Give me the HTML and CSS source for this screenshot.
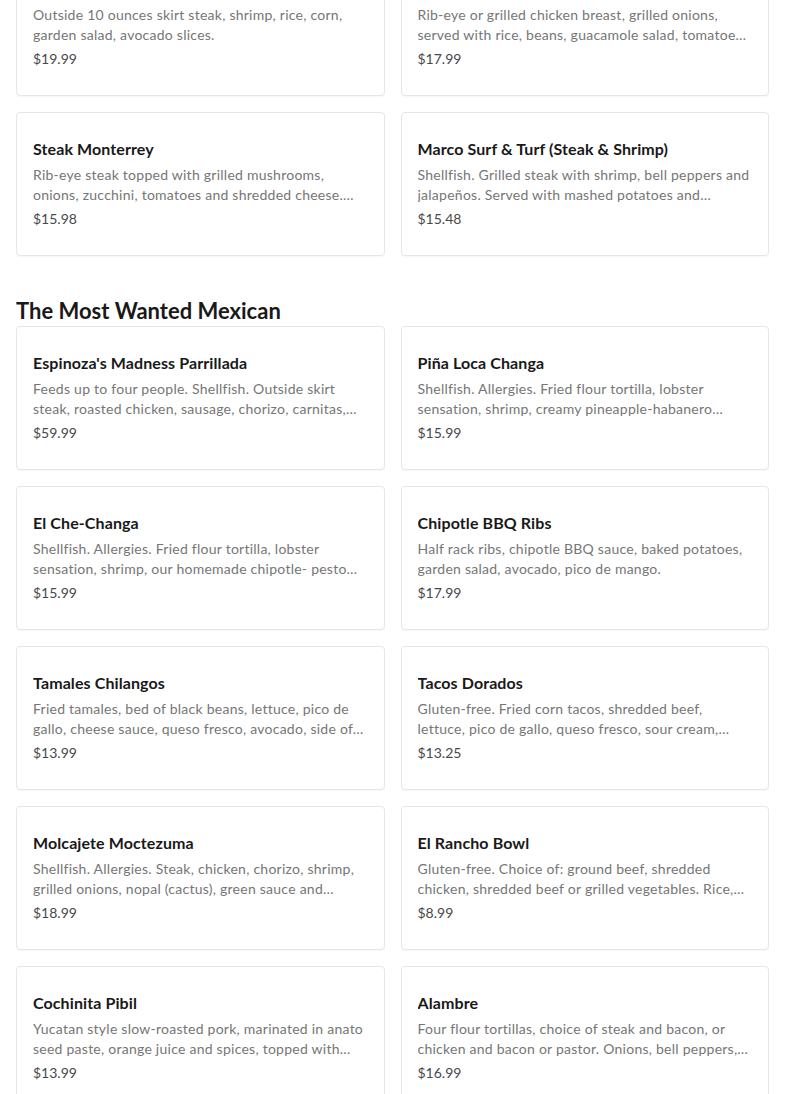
FILE: index.html
```html
<!DOCTYPE html>
<html lang="en">
<head>
<meta charset="utf-8">
<title>Menu</title>
<link rel="stylesheet" href="styles.css">
</head>
<body>
<main class="menu">
  <section class="section section--first">
    <div class="grid">
      <article class="card">
        <h3 class="card-title">Carne Asada</h3>
        <p class="card-desc">Outside 10 ounces skirt steak, shrimp, rice, corn, garden salad, avocado slices.</p>
        <p class="card-price">$19.99</p>
      </article>
      <article class="card">
        <h3 class="card-title">Fajitas</h3>
        <p class="card-desc">Rib-eye or grilled chicken breast, grilled onions, served with rice, beans, guacamole salad, tomatoes and tortillas.</p>
        <p class="card-price">$17.99</p>
      </article>
      <article class="card">
        <h3 class="card-title">Steak Monterrey</h3>
        <p class="card-desc">Rib-eye steak topped with grilled mushrooms, onions, zucchini, tomatoes and shredded cheese. Served with rice and beans.</p>
        <p class="card-price">$15.98</p>
      </article>
      <article class="card">
        <h3 class="card-title">Marco Surf &amp; Turf (Steak &amp; Shrimp)</h3>
        <p class="card-desc">Shellfish. Grilled steak with shrimp, bell peppers and jalapeños. Served with mashed potatoes and vegetables.</p>
        <p class="card-price">$15.48</p>
      </article>
    </div>
  </section>

  <section class="section">
    <h2 class="section-title">The Most Wanted Mexican</h2>
    <div class="grid">
      <article class="card">
        <h3 class="card-title">Espinoza's Madness Parrillada</h3>
        <p class="card-desc">Feeds up to four people. Shellfish. Outside skirt steak, roasted chicken, sausage, chorizo, carnitas, shrimp and more.</p>
        <p class="card-price">$59.99</p>
      </article>
      <article class="card">
        <h3 class="card-title">Piña Loca Changa</h3>
        <p class="card-desc">Shellfish. Allergies. Fried flour tortilla, lobster sensation, shrimp, creamy pineapple-habanero sauce and cheese.</p>
        <p class="card-price">$15.99</p>
      </article>
      <article class="card">
        <h3 class="card-title">El Che-Changa</h3>
        <p class="card-desc">Shellfish. Allergies. Fried flour tortilla, lobster sensation, shrimp, our homemade chipotle- pesto sauce and cheese.</p>
        <p class="card-price">$15.99</p>
      </article>
      <article class="card">
        <h3 class="card-title">Chipotle BBQ Ribs</h3>
        <p class="card-desc">Half rack ribs, chipotle BBQ sauce, baked potatoes, garden salad, avocado, pico de mango.</p>
        <p class="card-price">$17.99</p>
      </article>
      <article class="card">
        <h3 class="card-title">Tamales Chilangos</h3>
        <p class="card-desc">Fried tamales, bed of black beans, lettuce, pico de gallo, cheese sauce, queso fresco, avocado, side of sour cream.</p>
        <p class="card-price">$13.99</p>
      </article>
      <article class="card">
        <h3 class="card-title">Tacos Dorados</h3>
        <p class="card-desc">Gluten-free. Fried corn tacos, shredded beef, lettuce, pico de gallo, queso fresco, sour cream, avocado and salsa.</p>
        <p class="card-price">$13.25</p>
      </article>
      <article class="card">
        <h3 class="card-title">Molcajete Moctezuma</h3>
        <p class="card-desc">Shellfish. Allergies. Steak, chicken, chorizo, shrimp, grilled onions, nopal (cactus), green sauce and cheese.</p>
        <p class="card-price">$18.99</p>
      </article>
      <article class="card">
        <h3 class="card-title">El Rancho Bowl</h3>
        <p class="card-desc">Gluten-free. Choice of: ground beef, shredded chicken, shredded beef or grilled vegetables. Rice, beans and salsa.</p>
        <p class="card-price">$8.99</p>
      </article>
      <article class="card">
        <h3 class="card-title">Cochinita Pibil</h3>
        <p class="card-desc">Yucatan style slow-roasted pork, marinated in anato seed paste, orange juice and spices, topped with pickled onions.</p>
        <p class="card-price">$13.99</p>
      </article>
      <article class="card">
        <h3 class="card-title">Alambre</h3>
        <p class="card-desc">Four flour tortillas, choice of steak and bacon, or chicken and bacon or pastor. Onions, bell peppers, and cheese.</p>
        <p class="card-price">$16.99</p>
      </article>
    </div>
  </section>
</main>
</body>
</html>
```

FILE: styles.css
```css
html, body {
  margin: 0;
  padding: 0;
  background: #ffffff;
}

body {
  font-family: "Lato", "Roboto", "Noto Sans", sans-serif;
  color: #191919;
}

.menu {
  padding: 0 16px;
  margin-top: -48px;
}

.section {
  display: flex;
  flex-direction: column;
}

.section + .section {
  margin-top: 41px;
}

.section-title {
  margin: 0 0 1px;
  font-size: 22px;
  line-height: 28px;
  font-weight: 700;
  color: #191919;
}

.grid {
  display: grid;
  grid-template-columns: 1fr 1fr;
  column-gap: 16px;
  row-gap: 16px;
}

.card {
  border: 1px solid #e6e6e6;
  border-radius: 4px;
  padding: 24px 16px 26px;
  display: flex;
  flex-direction: column;
  gap: 4px;
  min-width: 0;
  background: #fff;
  box-shadow: 0 1px 1px rgba(0, 0, 0, 0.03);
}

.card-title {
  margin: 0;
  font-size: 16px;
  line-height: 24px;
  font-weight: 700;
  letter-spacing: 0.1px;
  color: #191919;
  white-space: nowrap;
  overflow: hidden;
  text-overflow: ellipsis;
}

.card-desc {
  margin: 0;
  font-size: 14px;
  line-height: 20px;
  letter-spacing: 0.25px;
  color: #767676;
  display: -webkit-box;
  -webkit-line-clamp: 2;
  -webkit-box-orient: vertical;
  overflow: hidden;
  height: 40px;
}

.card-price {
  margin: 0;
  font-size: 14px;
  line-height: 20px;
  color: #494949;
}
```
